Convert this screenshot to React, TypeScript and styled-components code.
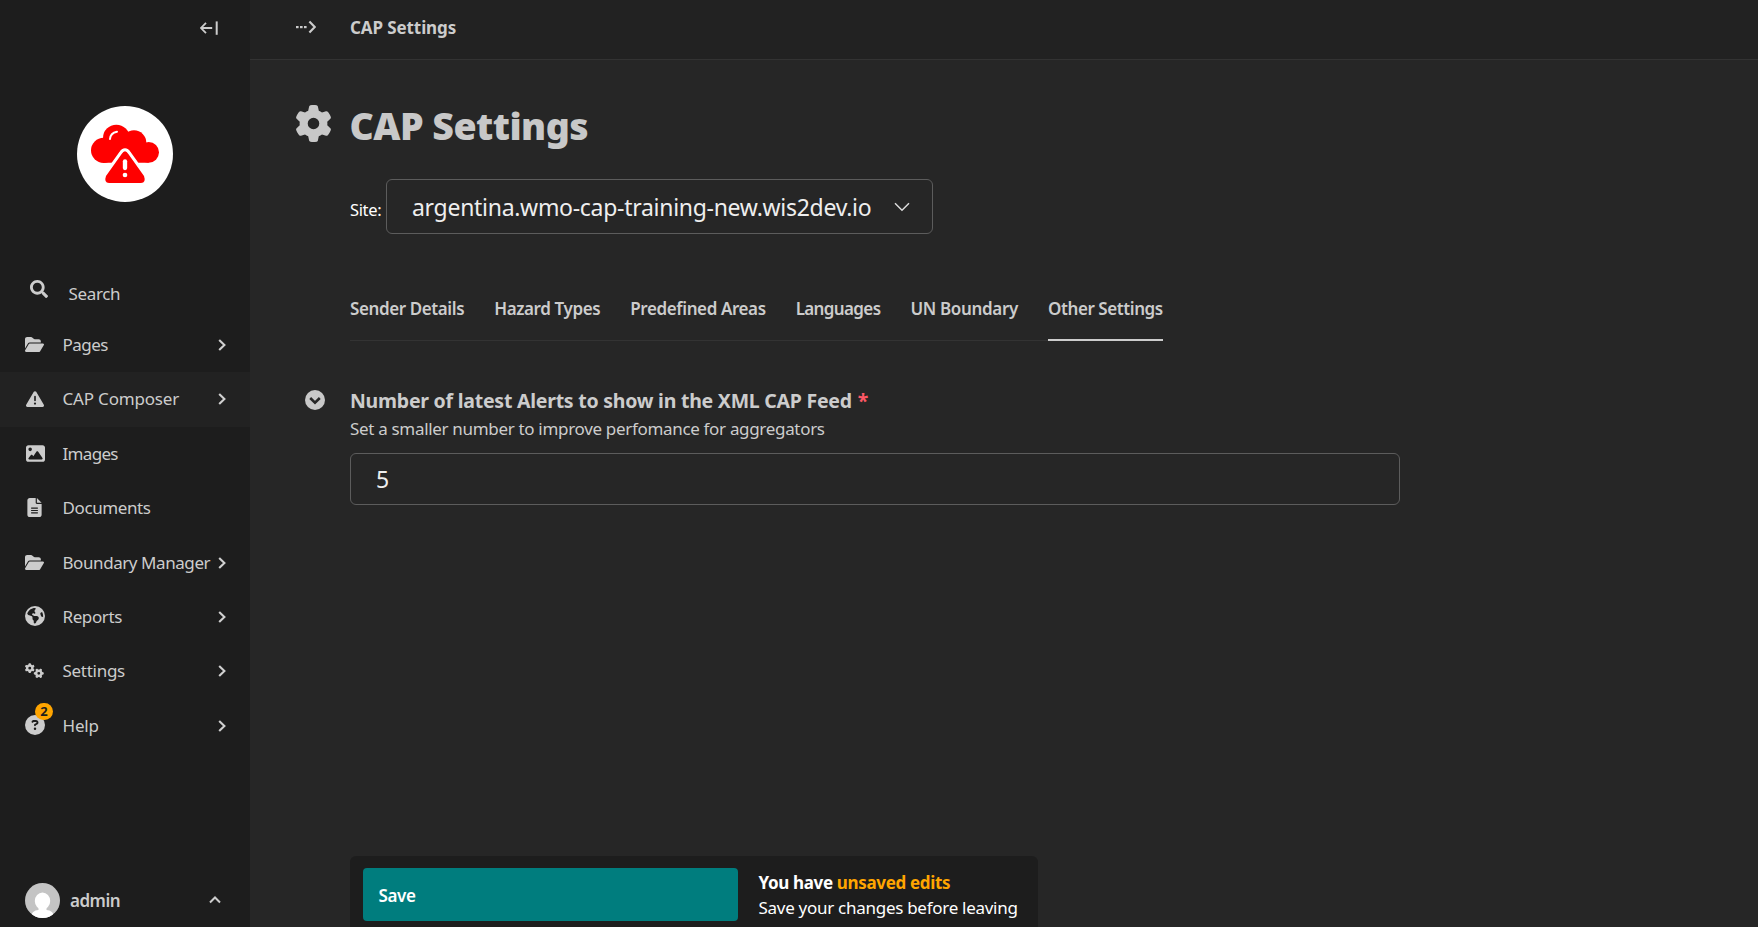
import React from "react";
import styled, { createGlobalStyle } from "styled-components";
import { FaSearch } from "react-icons/fa";
import {
  FaFolderOpen,
  FaTriangleExclamation,
  FaImage,
  FaFileLines,
  FaEarthAmericas,
  FaGears,
  FaCircleQuestion,
  FaGear,
} from "react-icons/fa6";

const Global = createGlobalStyle`
  * { box-sizing: border-box; }
  body {
    margin: 0;
    background: #262626;
    color: #cccccc;
    font-family: "Noto Sans", "Open Sans", sans-serif;
    overflow: hidden;
  }
  h1, p { margin: 0; }
  button, input { font-family: inherit; border: 0; }
`;

const Page = styled.div`
  display: grid;
  grid-template-columns: 250px 1fr;
  height: 927px;
`;

const Sidebar = styled.aside`
  display: flex;
  flex-direction: column;
  background: #1d1d1d;
`;

const SidebarTop = styled.div`
  display: flex;
  justify-content: flex-end;
  padding: 21px 32px 0 0;
  height: 106px;
`;

const Brand = styled.div`
  display: flex;
  justify-content: center;
  height: 161px;
  padding-left: 0.6px;
`;

const Label = styled.span<{ $track?: number; $weight?: number }>`
  font-size: 17px;
  line-height: 24px;
  white-space: nowrap;
  font-weight: ${(p) => p.$weight ?? 400};
  letter-spacing: ${(p) => p.$track ?? -0.35}px;
`;

const SearchRow = styled.div`
  display: flex;
  height: 50.8px;
  padding: 14px 0 0 30px;
  gap: 20.5px;
  svg { width: 18px; height: 18px; margin-top: -1px; }
  span { margin-top: 1px; }
`;

const Menu = styled.nav`
  flex: 1;
`;

const MenuItem = styled.div<{ $active?: boolean }>`
  display: flex;
  align-items: center;
  height: 54.4px;
  padding: 0 24.5px 0 25px;
  background: ${(p) => (p.$active ? "#222222" : "transparent")};
`;

const IconSlot = styled.span`
  position: relative;
  display: flex;
  align-items: center;
  width: 20px;
  height: 20px;
  margin: -1px 17.5px 0 0;
`;

const Badge = styled.span`
  position: absolute;
  top: -12px;
  left: 10px;
  width: 18px;
  height: 17px;
  border-radius: 9px;
  background: #ffa500;
  color: #1d1d1d;
  font-size: 13px;
  font-weight: 700;
  line-height: 17px;
  text-align: center;
`;

const Spring = styled.span`
  flex: 1;
`;

const Account = styled.div`
  display: flex;
  align-items: center;
  height: 54px;
  padding: 0 29px 0 25px;
  gap: 10px;
`;

const AccountName = styled(Label)`
  margin-top: 2px;
`;

const Main = styled.main`
  display: flex;
  flex-direction: column;
  min-width: 0;
`;

const TopBar = styled.header`
  display: flex;
  align-items: center;
  height: 60px;
  padding: 0 0 6px 46px;
  gap: 34px;
  background: #222222;
  border-bottom: 1px solid #333333;
`;

const Crumb = styled(Label)`
  margin-top: 2px;
`;

const TitleRow = styled.div`
  display: flex;
  align-items: center;
  height: 48px;
  margin-top: 41px;
  padding-left: 45px;
  gap: 17.5px;
  svg { margin-bottom: 3px; }
`;

const Title = styled.h1`
  padding-top: 1px;
  font-size: 37.5px;
  line-height: 48px;
  font-weight: 900;
  letter-spacing: -0.55px;
  color: #c8c8c8;
`;

const Content = styled.div`
  display: flex;
  flex-direction: column;
  flex: 1;
  padding-left: 100px;
`;

const SiteRow = styled.div`
  display: flex;
  align-items: flex-start;
  margin-top: 30px;
  color: #ffffff;
`;

const SiteLabel = styled(Label)`
  width: 36px;
  margin-top: 19px;
  font-size: 16.5px;
`;

const Select = styled.div`
  display: flex;
  align-items: center;
  justify-content: space-between;
  width: 547px;
  height: 55px;
  padding: 0 22.5px 0 25px;
  border: 1px solid #5c5c5c;
  border-radius: 6px;
  font-size: 23px;
  letter-spacing: -0.29px;
  color: #eeeeee;
`;

const Tabs = styled.div`
  display: flex;
  gap: 30px;
  width: 813px;
  height: 53px;
  margin-top: 54px;
  border-bottom: 1px solid #333333;
`;

const Tab = styled.div<{ $active?: boolean }>`
  height: 53px;
  padding-top: 9px;
  border-bottom: 2px solid ${(p) => (p.$active ? "#cccccc" : "transparent")};
`;

const Field = styled.section`
  display: flex;
  gap: 25px;
  margin: 47px 0 0 -45px;
`;

const Toggle = styled.span`
  display: flex;
  width: 20px;
  height: 20px;
  margin-top: 2px;
`;

const FieldBody = styled.div`
  display: flex;
  flex-direction: column;
  width: 1050px;
`;

const FieldLabel = styled.div`
  font-size: 19.5px;
  line-height: 26px;
  font-weight: 700;
  letter-spacing: -0.24px;
  span { color: #fd5765; margin-left: 1px; }
`;

const HelpText = styled(Label)`
  margin-top: 3px;
`;

const Input = styled.input`
  width: 1050px;
  height: 52px;
  margin-top: 12px;
  padding: 0 25px;
  border: 1px solid #5c5c5c;
  border-radius: 6px;
  background: transparent;
  color: #eeeeee;
  font-size: 23px;
  outline: none;
`;

const Footer = styled.footer`
  display: flex;
  width: 688px;
  height: 71px;
  margin-top: auto;
  padding: 12px 0 0 13px;
  gap: 20.5px;
  border-radius: 6px 6px 0 0;
  background: #1d1d1d;
  color: #ffffff;
`;

const SaveButton = styled.button`
  width: 375px;
  height: 53px;
  padding: 2px 15.5px 0;
  border-radius: 4px;
  background: #007d7e;
  color: #ffffff;
  font-size: 17px;
  font-weight: 600;
  letter-spacing: -0.4px;
  text-align: left;
`;

const Notice = styled.div`
  display: flex;
  flex-direction: column;
  padding-top: 2px;
  em { font-style: normal; color: #ffa500; }
`;

const NoticeLine = styled(Label)`
  line-height: 25px;
`;

const Chevron = () => (
  <svg width="8" height="12" viewBox="0 0 8 12" fill="none" stroke="#d0d0d0" strokeWidth="2.1">
    <path d="M1.2 1 6.4 6 1.2 11" />
  </svg>
);

const CollapseIcon = () => (
  <svg width="18" height="14" viewBox="0 0 18 14" fill="none" stroke="#cccccc" strokeWidth="1.8">
    <path d="M1.2 7H12.2M6 1.8 1 7 6 12.2" />
    <path d="M16.7 0.4V13.8" strokeWidth="2" />
  </svg>
);

const ExpandIcon = () => (
  <svg width="20" height="14" viewBox="0 0 20 14" fill="#cccccc">
    <rect x="0" y="6" width="2.6" height="2.2" />
    <rect x="4" y="6" width="2.6" height="2.2" />
    <rect x="8" y="6" width="2.6" height="2.2" />
    <path d="M13.4 1.4 18.8 7 13.4 12.6" fill="none" stroke="#cccccc" strokeWidth="2.2" />
  </svg>
);

const Logo = () => (
  <svg width="96" height="96" viewBox="232 318 288 288">
    <circle cx="376" cy="462" r="144" fill="#ffffff" />
    <g fill="#ff0000">
      <circle cx="312" cy="451" r="38" />
      <circle cx="350" cy="414" r="40" />
      <circle cx="403" cy="428" r="37" />
      <circle cx="447" cy="457" r="31" />
      <path d="M312 430H447V488H312Z" />
      <path
        d="M366 462Q376 446 386 462L433 528Q440 548 424 549H328Q312 548 319 528Z"
        stroke="#ffffff"
        strokeWidth="18"
        paintOrder="stroke"
      />
    </g>
    <path d="M309 549H443V566H309Z" fill="#ffffff" />
    <path d="M331 417Q332 399 352 395" fill="none" stroke="#ffffff" strokeWidth="6" strokeLinecap="round" />
    <path d="M376 484V504" stroke="#ffffff" strokeWidth="13" strokeLinecap="round" />
    <circle cx="376" cy="525" r="7" fill="#ffffff" />
  </svg>
);

const Avatar = () => (
  <svg width="35" height="35" viewBox="0 0 35 35">
    <clipPath id="avatar-clip">
      <circle cx="17.5" cy="17.5" r="17.5" />
    </clipPath>
    <g clipPath="url(#avatar-clip)">
      <rect width="35" height="35" fill="#c4c4c4" />
      <ellipse cx="17.5" cy="18" rx="7.7" ry="8.6" fill="#ffffff" />
      <path d="M13.5 23H21.5V27Q28 27 30 35H5Q7 27 13.5 27Z" fill="#ffffff" />
    </g>
  </svg>
);

const WarningIcon = styled(FaTriangleExclamation)`
  margin-left: 1px;
`;

const ImageIcon = styled(FaImage)`
  margin-left: 1px;
`;

const menu = [
  { label: "Pages", icon: <FaFolderOpen size={19} />, arrow: true, track: -0.5 },
  { label: "CAP Composer", icon: <WarningIcon size={18} />, arrow: true, active: true, track: -0.18 },
  { label: "Images", icon: <ImageIcon size={19} />, track: -0.68 },
  { label: "Documents", icon: <FaFileLines size={19} />, track: -0.4 },
  { label: "Boundary Manager", icon: <FaFolderOpen size={19} />, arrow: true, track: -0.43 },
  { label: "Reports", icon: <FaEarthAmericas size={20} />, arrow: true, track: -0.4 },
  { label: "Settings", icon: <FaGears size={19} />, arrow: true, track: -0.28 },
  { label: "Help", icon: <FaCircleQuestion size={20} />, arrow: true, track: -0.2, badge: "2" },
];

const tabs = [
  { label: "Sender Details", track: -0.4 },
  { label: "Hazard Types", track: -0.38 },
  { label: "Predefined Areas", track: -0.4 },
  { label: "Languages", track: -0.64 },
  { label: "UN Boundary", track: -0.33 },
  { label: "Other Settings", track: -0.42 },
];

export default function App() {
  return (
    <>
      <Global />
      <Page>
        <Sidebar>
          <SidebarTop>
            <CollapseIcon />
          </SidebarTop>
          <Brand>
            <Logo />
          </Brand>
          <SearchRow>
            <FaSearch />
            <Label $track={-0.35}>Search</Label>
          </SearchRow>
          <Menu>
            {menu.map((m) => (
              <MenuItem key={m.label} $active={m.active}>
                <IconSlot>
                  {m.icon}
                  {m.badge && <Badge>{m.badge}</Badge>}
                </IconSlot>
                <Label $track={m.track}>{m.label}</Label>
                <Spring />
                {m.arrow && <Chevron />}
              </MenuItem>
            ))}
          </Menu>
          <Account>
            <Avatar />
            <AccountName $weight={600} $track={-0.5}>admin</AccountName>
            <Spring />
            <svg width="12" height="8" viewBox="0 0 12 8" fill="none" stroke="#cccccc" strokeWidth="2">
              <path d="M1 6.5 6 1.5 11 6.5" />
            </svg>
          </Account>
        </Sidebar>
        <Main>
          <TopBar>
            <ExpandIcon />
            <Crumb $weight={700} $track={-0.1}>CAP Settings</Crumb>
          </TopBar>
          <TitleRow>
            <FaGear size={37} color="#c8c8c8" />
            <Title>CAP Settings</Title>
          </TitleRow>
          <Content>
            <SiteRow>
              <SiteLabel>Site:</SiteLabel>
              <Select>
                argentina.wmo-cap-training-new.wis2dev.io
                <svg width="16" height="10" viewBox="0 0 16 10" fill="none" stroke="#dddddd" strokeWidth="1.5">
                  <path d="M1 1.2 8 8.2 15 1.2" />
                </svg>
              </Select>
            </SiteRow>
            <Tabs>
              {tabs.map((t) => (
                <Tab key={t.label} $active={t.label === "Other Settings"}>
                  <Label $weight={600} $track={t.track}>{t.label}</Label>
                </Tab>
              ))}
            </Tabs>
            <Field>
              <Toggle>
                <svg width="20" height="20" viewBox="0 0 20 20">
                  <circle cx="10" cy="10" r="10" fill="#c8c8c8" />
                  <path d="M5.2 8 10 12.6 14.8 8" fill="none" stroke="#262626" strokeWidth="2.6" />
                </svg>
              </Toggle>
              <FieldBody>
                <FieldLabel>
                  Number of latest Alerts to show in the XML CAP Feed <span>*</span>
                </FieldLabel>
                <HelpText $track={-0.32}>Set a smaller number to improve perfomance for aggregators</HelpText>
                <Input defaultValue="5" />
              </FieldBody>
            </Field>
            <Footer>
              <SaveButton>Save</SaveButton>
              <Notice>
                <NoticeLine $weight={700} $track={-0.34}>
                  You have <em>unsaved edits</em>
                </NoticeLine>
                <NoticeLine $track={-0.28}>Save your changes before leaving</NoticeLine>
              </Notice>
            </Footer>
          </Content>
        </Main>
      </Page>
    </>
  );
}
